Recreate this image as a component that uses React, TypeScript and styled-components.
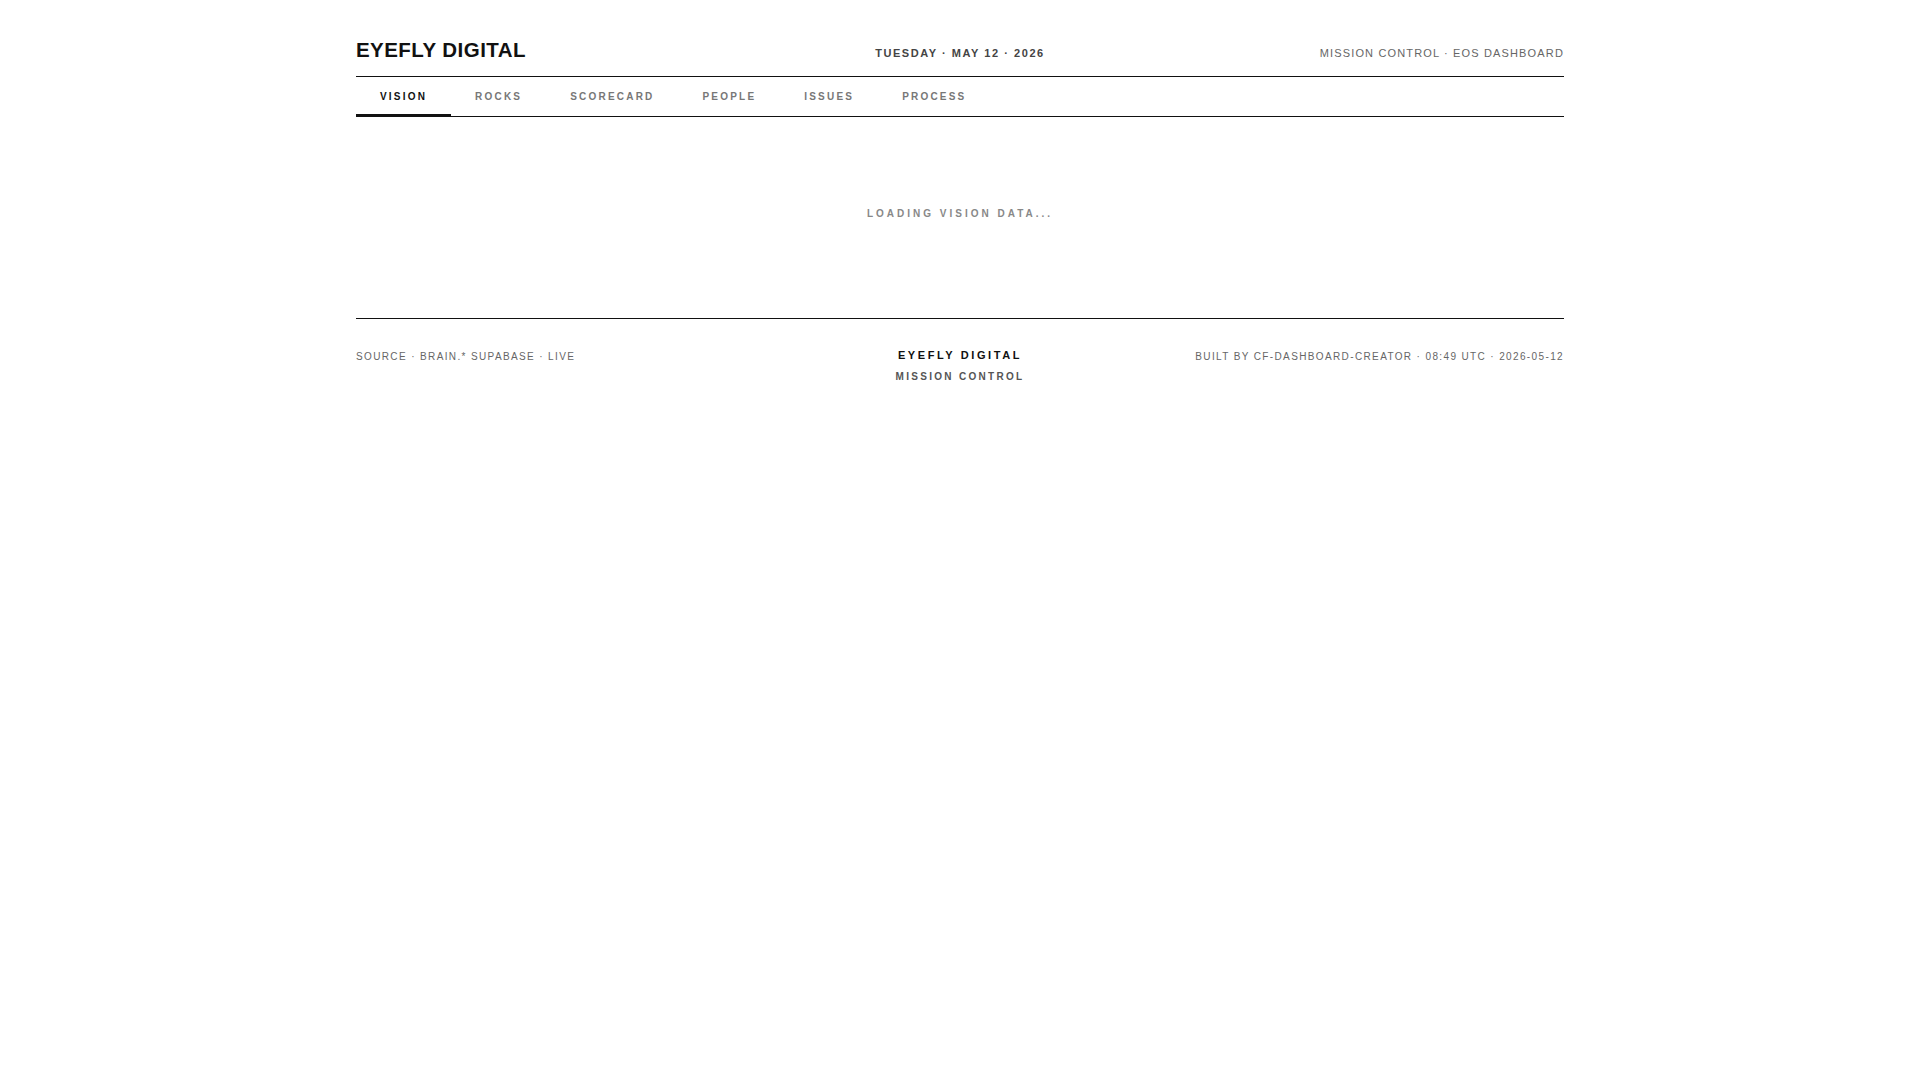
import styled, { createGlobalStyle } from 'styled-components';

const GlobalStyle = createGlobalStyle`
  html, body {
    margin: 0;
    padding: 0;
    background: #ffffff;
  }
  body {
    font-family: "Liberation Sans", Arial, Helvetica, sans-serif;
    color: #111;
  }
  * {
    box-sizing: border-box;
  }
`;

const Page = styled.div`
  max-width: 1208px;
  margin: 0 auto;
`;

const Header = styled.header`
  display: grid;
  grid-template-columns: 1fr auto 1fr;
  align-items: baseline;
  padding: 38px 0 15px;
  border-bottom: 1px solid #111;
`;

const Brand = styled.h1`
  margin: 0;
  font-size: 20.5px;
  line-height: 23px;
  font-weight: 700;
  letter-spacing: 0.45px;
  color: #111;
`;

const DateLine = styled.div`
  font-size: 11px;
  font-weight: 700;
  letter-spacing: 1.55px;
  color: #444;
  justify-self: center;
`;

const Tagline = styled.div`
  font-size: 11px;
  letter-spacing: 1.15px;
  color: #666;
  justify-self: end;
`;

const Tabs = styled.nav`
  display: flex;
  border-bottom: 1px solid #111;
`;

const Tab = styled.button<{ $active?: boolean }>`
  appearance: none;
  background: transparent;
  border: none;
  border-bottom: 2px solid ${({ $active }) => ($active ? '#111' : 'transparent')};
  margin: 0;
  padding: 14px 24px 11px;
  font-family: inherit;
  font-size: 10px;
  line-height: 12px;
  font-weight: 700;
  letter-spacing: 2.2px;
  color: ${({ $active }) => ($active ? '#111' : '#777')};
  cursor: pointer;
`;

const Main = styled.main`
  display: flex;
  justify-content: center;
  padding: 91px 0 98px;
  border-bottom: 1px solid #111;
`;

const Loading = styled.div`
  font-size: 10px;
  line-height: 12px;
  font-weight: 700;
  letter-spacing: 3px;
  color: #888;
`;

const Footer = styled.footer`
  display: grid;
  grid-template-columns: 1fr auto 1fr;
  align-items: start;
  padding-top: 31px;
`;

const FootNote = styled.div<{ $align?: 'start' | 'end' }>`
  font-size: 10px;
  line-height: 14px;
  letter-spacing: 1.37px;
  color: #666;
  justify-self: ${({ $align }) => $align ?? 'start'};
`;

const FootBrand = styled.div`
  display: flex;
  flex-direction: column;
  align-items: center;
  gap: 11px;
`;

const FootTitle = styled.div`
  font-size: 11px;
  line-height: 10px;
  font-weight: 700;
  letter-spacing: 2.6px;
  color: #111;
`;

const FootSub = styled.div`
  font-size: 10px;
  line-height: 12px;
  font-weight: 700;
  letter-spacing: 2.3px;
  color: #555;
`;

const tabs = ['VISION', 'ROCKS', 'SCORECARD', 'PEOPLE', 'ISSUES', 'PROCESS'];

export default function App() {
  return (
    <>
      <GlobalStyle />
      <Page>
        <Header>
          <Brand>EYEFLY DIGITAL</Brand>
          <DateLine>TUESDAY · MAY 12 · 2026</DateLine>
          <Tagline>MISSION CONTROL · EOS DASHBOARD</Tagline>
        </Header>
        <Tabs>
          {tabs.map((t) => (
            <Tab key={t} $active={t === 'VISION'}>
              {t}
            </Tab>
          ))}
        </Tabs>
        <Main>
          <Loading>LOADING VISION DATA...</Loading>
        </Main>
        <Footer>
          <FootNote>SOURCE · BRAIN.* SUPABASE · LIVE</FootNote>
          <FootBrand>
            <FootTitle>EYEFLY DIGITAL</FootTitle>
            <FootSub>MISSION CONTROL</FootSub>
          </FootBrand>
          <FootNote $align="end">BUILT BY CF-DASHBOARD-CREATOR · 08:49 UTC · 2026-05-12</FootNote>
        </Footer>
      </Page>
    </>
  );
}
